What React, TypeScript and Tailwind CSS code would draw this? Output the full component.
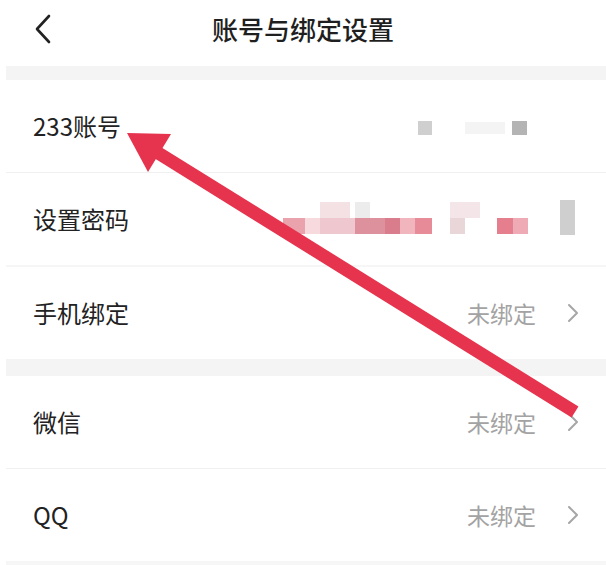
const FONT = { fontFamily: '"Noto Sans CJK SC", "Noto Sans", sans-serif' }

function BackIcon() {
  return (
    <svg width="20" height="30" viewBox="0 0 20 30" fill="none">
      <polyline points="15,2 3,15 15,28" stroke="#222" strokeWidth="2.6" strokeLinecap="round" strokeLinejoin="round" />
    </svg>
  )
}

function Chevron() {
  return (
    <svg width="14" height="22" viewBox="0 0 14 22" fill="none">
      <polyline points="3,3 11,11 3,19" stroke="#a6a6a6" strokeWidth="2" strokeLinecap="round" strokeLinejoin="round" />
    </svg>
  )
}

function Row({ label, value, children }: { label: string; value?: string; children?: React.ReactNode }) {
  return (
    <div className="relative h-[92px] flex items-center justify-between pl-[27px] pr-[26px]">
      <span className="text-[24px] text-[#222] leading-none">{label}</span>
      {value && (
        <div className="flex items-center gap-[30px]">
          <span className="text-[23px] text-[#a3a3a3] leading-none">{value}</span>
          <Chevron />
        </div>
      )}
      {children}
    </div>
  )
}

// censor mosaic drawn over the account number
function AccountMosaic() {
  return (
    <svg className="absolute left-[404px] top-[38px]" width="130" height="22" viewBox="0 0 130 22">
      <rect x="8" y="3" width="14" height="14" fill="#cfcfcf" />
      <rect x="55" y="4" width="40" height="12" fill="#f4f4f4" />
      <rect x="102" y="3" width="15" height="14" fill="#b4b4b4" />
    </svg>
  )
}

// censor mosaic drawn over the password hint
function PasswordMosaic() {
  const blocks: [number, number, number, number, string][] = [
    [70, 29, 30, 16, '#f4e1e4'],
    [105, 29, 15, 16, '#ececec'],
    [200, 29, 30, 16, '#f4e6e8'],
    [33, 45, 22, 16, '#eaa3ad'],
    [55, 45, 15, 16, '#f6dade'],
    [70, 45, 35, 16, '#eec8ce'],
    [105, 45, 30, 16, '#dc919d'],
    [135, 45, 15, 16, '#d97c8b'],
    [150, 45, 15, 16, '#f0b5bd'],
    [165, 45, 17, 16, '#e78b99'],
    [200, 45, 15, 16, '#e9d6d9'],
    [247, 45, 16, 16, '#e57f8e'],
    [263, 45, 15, 16, '#efabb5'],
    [310, 27, 15, 35, '#cfcfcf'],
  ]
  return (
    <svg className="absolute left-[244px] top-0" width="340" height="92" viewBox="0 0 340 92">
      {blocks.map(([x, y, w, h, c], i) => (
        <rect key={i} x={x} y={y} width={w} height={h} fill={c} />
      ))}
    </svg>
  )
}

function RedArrow() {
  return (
    <svg className="absolute inset-0 pointer-events-none" width="606" height="565" viewBox="0 0 606 565">
      <line x1="155" y1="151" x2="575" y2="412" stroke="#e6334e" strokeWidth="13" />
      <polygon points="127,133 171,134 148,172" fill="#e6334e" />
    </svg>
  )
}

export default function App() {
  return (
    <div className="relative w-[606px] h-[565px] bg-white overflow-hidden" style={FONT}>
      <div className="h-[66px] grid grid-cols-[1fr_auto_1fr] items-center pb-[8px]">
        <div className="pl-[34px] flex items-center">
          <BackIcon />
        </div>
        <h1 className="text-[26px] text-[#1f1f1f] leading-none font-medium">账号与绑定设置</h1>
        <div />
      </div>

      <div className="ml-[6px]">
        <div className="h-[14px] bg-[#f4f4f4]" />
        <Row label="233账号">
          <AccountMosaic />
        </Row>
        <div className="h-px bg-[#f0f0f0]" />
        <Row label="设置密码">
          <PasswordMosaic />
        </Row>
        <div className="h-[2px] bg-[#f6f6f6]" />
        <Row label="手机绑定" value="未绑定" />
        <div className="h-[17px] bg-[#f4f4f4]" />
        <Row label="微信" value="未绑定" />
        <div className="h-px bg-[#f0f0f0]" />
        <Row label="QQ" value="未绑定" />
        <div className="h-[10px] bg-[#f6f6f6]" />
      </div>

      <RedArrow />
    </div>
  )
}
